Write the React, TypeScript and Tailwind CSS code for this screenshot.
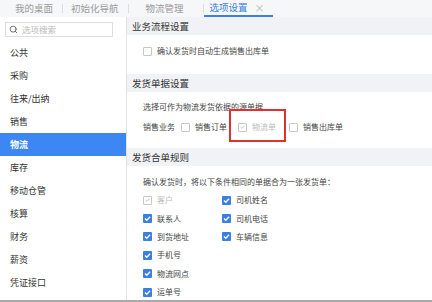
import { Search } from "lucide-react";

const font = { fontFamily: '"Noto Sans CJK SC", "Noto Sans", sans-serif' };

function Box({ checked, disabled }: { checked?: boolean; disabled?: boolean }) {
  if (checked && !disabled) {
    return (
      <span className="flex h-[9px] w-[9px] shrink-0 items-center justify-center rounded-[1px] bg-[#3b7fe0]">
        <svg viewBox="0 0 10 10" className="h-[9px] w-[9px]">
          <path d="M2.2 5.1 L4.2 7 L7.9 3.1" fill="none" stroke="#fff" strokeWidth="1.5" />
        </svg>
      </span>
    );
  }
  return (
    <span className="flex h-[9px] w-[9px] shrink-0 items-center justify-center rounded-[1px] border border-[#c8c8c8] bg-white">
      {checked && (
        <svg viewBox="0 0 10 10" className="h-[8px] w-[8px]">
          <path d="M2.2 5.1 L4.2 7 L7.9 3.1" fill="none" stroke="#bdbdbd" strokeWidth="1.3" />
        </svg>
      )}
    </span>
  );
}

function Check({ label, checked, disabled }: { label: string; checked?: boolean; disabled?: boolean }) {
  return (
    <div className="flex items-center gap-[5px]">
      <Box checked={checked} disabled={disabled} />
      <span className={disabled ? "text-[#bcbcbc]" : "text-[#444]"}>{label}</span>
    </div>
  );
}

const menu = ["公共", "采购", "往来/出纳", "销售", "物流", "库存", "移动仓管", "核算", "财务", "薪资", "凭证接口", "营销"];

const merge: [string, boolean, boolean][] = [
  ["客户", true, true],
  ["司机姓名", true, false],
  ["联系人", true, false],
  ["司机电话", true, false],
  ["到货地址", true, false],
  ["车辆信息", true, false],
  ["手机号", true, false],
  ["", false, false],
  ["物流网点", true, false],
  ["", false, false],
  ["运单号", true, false],
];

export default function App() {
  return (
    <div className="flex h-[302px] w-[432px] flex-col overflow-hidden bg-white" style={font}>
      {/* tabs */}
      <div className="flex h-[17px] shrink-0 items-stretch bg-[#f6f7f9] text-[9.5px] text-[#9a9a9a]">
        <div className="flex items-center pl-[15px] pr-[9px]">我的桌面</div>
        <div className="my-[4px] w-px bg-[#dcdcdc]" />
        <div className="flex items-center pl-[8px] pr-[9px]">初始化导航</div>
        <div className="my-[4px] w-px bg-[#dcdcdc]" />
        <div className="flex items-center pl-[17px] pr-[19px]">物流管理</div>
        <div className="my-[4px] w-px bg-[#dcdcdc]" />
        <div className="flex items-center gap-[7px] border-b-2 border-[#3b7fe0] pl-[6px] pr-[8px] text-[#3b7fe0]">
          <span>选项设置</span>
          <span className="text-[10px] text-[#b5b5b5]">×</span>
        </div>
      </div>

      <div className="flex min-h-0 flex-1">
        {/* sidebar */}
        <div className="flex w-[127px] shrink-0 flex-col border-r border-[#e3e3e3]">
          <div className="px-[5px] pt-[5px]">
            <div className="flex h-[15px] w-[108px] items-center gap-[4px] border border-[#dedede] px-[3px] text-[8.5px] text-[#b8b8b8]">
              <Search className="h-[9px] w-[9px] text-[#555]" strokeWidth={2.2} />
              <span>选项搜索</span>
            </div>
          </div>
          <div className="mt-[4px] flex flex-col text-[9px] text-[#333]">
            {menu.map((m) => (
              <div
                key={m}
                className={
                  m === "物流"
                    ? "flex h-[23px] shrink-0 items-center bg-[#3c87f4] pl-[10px] font-bold text-white"
                    : "flex h-[23px] shrink-0 items-center pl-[10px]"
                }
              >
                {m}
              </div>
            ))}
          </div>
        </div>

        {/* content */}
        <div className="relative flex min-w-0 flex-1 flex-col text-[8px] text-[#444]">
          <div className="flex h-[18px] shrink-0 items-center bg-[#f1f2f5] pl-[5px] text-[9.5px] text-[#333]">业务流程设置</div>
          <div className="h-[39px] shrink-0 pl-[16px] pt-[10px]">
            <Check label="确认发货时自动生成销售出库单" />
          </div>

          <div className="flex h-[18px] shrink-0 items-center bg-[#f1f2f5] pl-[5px] text-[9.5px] text-[#333]">发货单据设置</div>
          <div className="flex h-[56px] shrink-0 flex-col gap-[10px] pl-[16px] pt-[10px]">
            <div className="leading-[10px]">选择可作为物流发货依据的源单据</div>
            <div className="flex h-[10px] items-center">
              <span className="mr-[6px]">销售业务</span>
              <Check label="销售订单" />
              <div className="ml-[11px]">
                <Check label="物流单" checked disabled />
              </div>
              <div className="ml-[13px]">
                <Check label="销售出库单" />
              </div>
            </div>
          </div>

          <div className="flex h-[18px] shrink-0 items-center bg-[#f1f2f5] pl-[5px] text-[9.5px] text-[#333]">发货合单规则</div>
          <div className="pl-[16px] pt-[11px]">
            <div className="leading-[10px]">确认发货时，将以下条件相同的单据合为一张发货单：</div>
            <div className="mt-[4px] grid grid-cols-[79px_1fr]">
              {merge.map(([l, c, d], i) => (
                <div key={i} className="flex h-[18.4px] items-center">
                  {l && <Check label={l} checked={c} disabled={d} />}
                </div>
              ))}
            </div>
          </div>

          {/* annotation */}
          <div className="absolute left-[102px] top-[92px] h-[33px] w-[57px] border-2 border-[#e0312f]" />
        </div>
      </div>

      <div className="h-[2px] shrink-0 bg-[#a9a9a9]" />
    </div>
  );
}
